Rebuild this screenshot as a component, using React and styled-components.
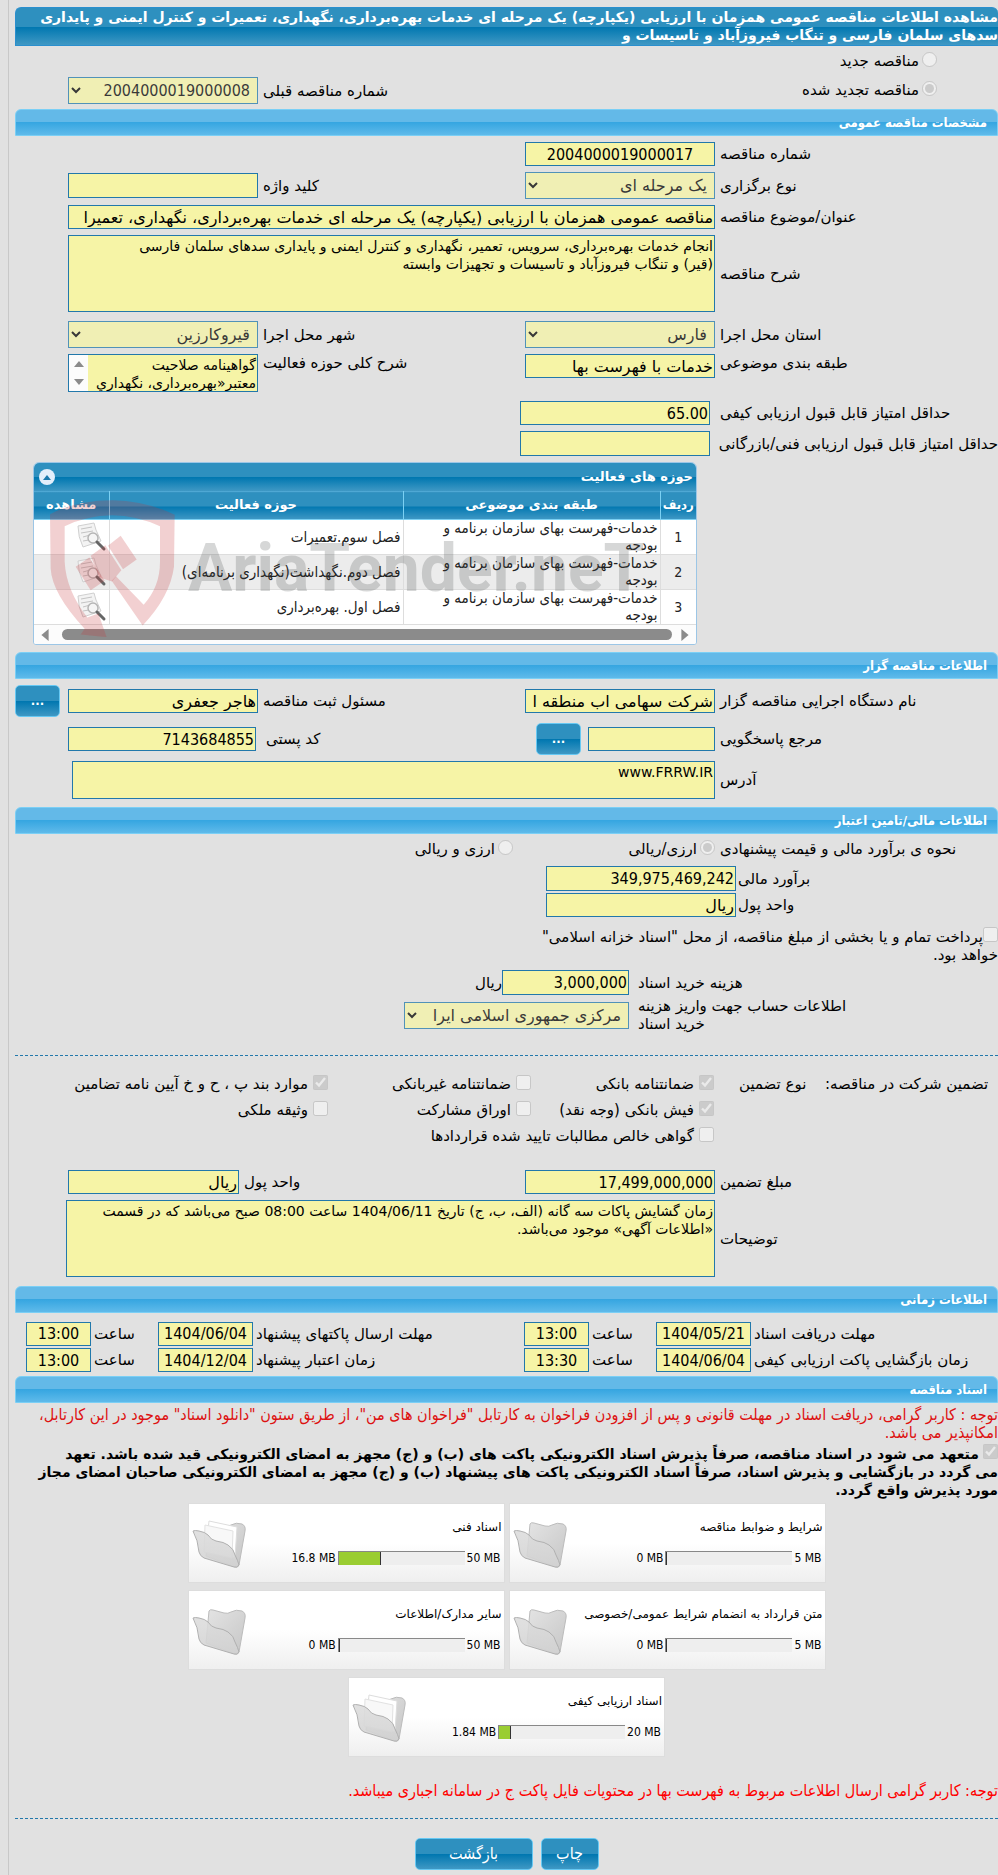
import React from "react";
import styled, { createGlobalStyle, css } from "styled-components";

const wide = `"DejaVu Sans", sans-serif`;
const narrow = `"DejaVu Sans Condensed", "DejaVu Sans", sans-serif`;

const GlobalStyle = createGlobalStyle`
  * {
    box-sizing: border-box;
  }
  body {
    margin: 0;
    background: #e1e1e1;
    overflow-x: hidden;
  }
  body, input, select, textarea, button {
    font-family: ${wide};
    font-size: 15px;
    line-height: 18px;
    color: #000;
  }
`;

const darkBar = css`
  background: linear-gradient(#2e90bf 0, #2e90bf 50%, #0077b0 51%, #3f98c4 100%);
`;

const Page = styled.main`
  direction: rtl;
  margin-left: 8px;
  padding: 7px 0 5px 6px;
  border-left: 1px solid #c8c8c8;
`;

const Title = styled.h1`
  ${darkBar}
  margin: 0;
  min-height: 39px;
  border: 1px solid #2a8fce;
  border-right: 0;
  border-radius: 6px 6px 0 0;
  color: #fff;
  font-size: 14px;
  line-height: 18px;
  font-weight: bold;
`;

const SectionBar = styled.h2`
  margin: ${(p) => p.$top ?? 9}px 0 ${(p) => p.$bottom ?? 6}px;
  height: 27px;
  padding: 0 10px;
  border: 1px solid #7bcff5;
  border-radius: 6px 6px 0 0;
  background: linear-gradient(#63b9e8 0, #63b9e8 48%, #36a6e1 50%, #5fbaea 100%);
  color: #fff;
  font-family: ${narrow};
  font-size: 13px;
  line-height: 25px;
  font-weight: bold;
`;

const Rows = styled.div`
  display: flex;
  flex-direction: column;
  gap: ${(p) => p.$gap ?? 6}px;
`;

const Row = styled.div`
  display: flex;
  align-items: ${(p) => p.$align || "center"};
  min-height: ${(p) => p.$h || 24}px;
  padding-left: ${(p) => p.$pad ?? 53}px;
  margin-top: ${(p) => p.$top || 0}px;
`;

const Label = styled.label`
  flex: 0 0 ${(p) => p.$w || 283}px;
  min-width: 0;
  padding-left: ${(p) => p.$gap ?? 5}px;
  text-align: left;
  white-space: nowrap;
`;

const MidLabel = styled.label`
  flex: 1;
  padding-left: ${(p) => p.$gap ?? 5}px;
  text-align: left;
  white-space: nowrap;
`;

const field = css`
  border: 1px solid #2278ab;
  border-radius: 0;
  background: #f6f4a6;
  margin: 0;
  outline: 0;
`;

const Input = styled.input`
  ${field}
  width: ${(p) => p.$w || 190}px;
  height: ${(p) => p.$h || 24}px;
  padding: 1px;
  font-family: ${(p) => (p.$text ? wide : narrow)};
  font-size: 16px;
  text-align: ${(p) => (p.$center ? "center" : "right")};
  ${(p) => p.$grow && "flex: 1; min-width: 0;"}
`;

const Area = styled.textarea`
  ${field}
  flex: 1;
  min-width: 0;
  height: ${(p) => p.$h}px;
  padding: 1px;
  font-size: 14px;
  resize: none;
  overflow: hidden;
`;

const Select = styled.select`
  ${field}
  width: ${(p) => p.$w || 190}px;
  height: 27px;
  padding: 0 3px;
  font-family: ${(p) => (p.$digits ? narrow : wide)};
  font-size: 16px;
  opacity: 0.75;
`;

const ScrollArea = styled.div`
  ${field}
  display: flex;
  width: 190px;
  height: 38px;

  textarea {
    border: 0;
    height: 36px;
  }
`;

const ScrollTrack = styled.div`
  width: 19px;
  background: #fcfcfc;
  display: flex;
  flex-direction: column;
  align-items: center;
  justify-content: space-between;
  padding: 4px 0;
`;

const Tick = styled.input`
  flex: none;
  width: 15px;
  height: 15px;
  margin: ${(p) => p.$m || "0"};
`;

const Choice = styled.label`
  display: flex;
  align-items: flex-start;
  gap: 3px;
  line-height: 19px;
  white-space: nowrap;
  ${(p) => p.$w && `width: ${p.$w}px;`}

  input[type="checkbox"] {
    margin-left: 2px;
  }
`;

const Button = styled.button`
  ${darkBar}
  width: ${(p) => p.$w || 45}px;
  height: 32px;
  padding: 0;
  border: 1px solid #66c8f3;
  border-radius: 5px;
  color: #fff;
  font-family: ${narrow};
  font-size: ${(p) => (p.$small ? 13 : 16)}px;
  font-weight: ${(p) => (p.$small ? "bold" : "normal")};
`;

const Divider = styled.hr`
  margin: ${(p) => p.$m};
  border: 0;
  border-top: 1px dashed #2278ab;
`;

/* activities grid */

const GridBox = styled.section`
  position: relative;
  margin: 0 301px 0 18px;
  border: 1px solid #9cc6e6;
  border-radius: 6px 6px 3px 3px;
  overflow: hidden;
  background: #fff;
`;

const GridTitle = styled.div`
  ${darkBar}
  display: flex;
  align-items: center;
  justify-content: space-between;
  height: 28px;
  padding: 0 3px 0 5px;
  color: #fff;
  font-weight: bold;
  font-size: 13px;
`;

const Fold = styled.button`
  display: flex;
  align-items: center;
  justify-content: center;
  width: 16px;
  height: 16px;
  padding: 0;
  border: 0;
  border-radius: 50%;
  background: #e3eefb;
`;

const Table = styled.table`
  width: 100%;
  border-collapse: collapse;
  table-layout: fixed;

  th {
    ${darkBar}
    height: 28px;
    padding: 0 0 2px;
    border-top: 1px solid #4fa8d4;
    border-bottom: 1px solid #7bd0f3;
    border-left: 1px solid #7bd0f3;
    color: #fff;
    font-size: 13px;
    white-space: nowrap;
  }
  th:first-child {
    font-family: ${narrow};
  }
  th:last-child,
  td:last-child {
    border-left: 0;
  }
  td {
    height: 35px;
    padding: 0 2px;
    border-bottom: 1px solid #ddd;
    border-left: 1px solid #ddd;
    font-family: ${narrow};
    font-size: 15px;
    line-height: 17px;
    color: #222;
  }
  tr:nth-child(even) td {
    background: #ececec;
  }
  td:first-child {
    text-align: center;
    font-size: 14px;
  }
  svg {
    display: block;
    margin-right: auto;
    margin-left: 42px;
  }
`;

const HScroll = styled.div`
  direction: ltr;
  display: flex;
  align-items: center;
  justify-content: space-between;
  height: 19px;
  padding: 0 5px;
  background: #fcfcfc;
`;

const Thumb = styled.div`
  flex: 1;
  height: 11px;
  margin: 0 7px 0 11px;
  border-radius: 6px;
  background: #8b8b8b;
`;

const Watermark = styled.div`
  position: absolute;
  left: 16px;
  top: 37px;
  direction: ltr;
  display: flex;
  gap: 13px;
  pointer-events: none;
`;

const Brand = styled.span`
  margin-top: 29px;
  font: bold 66px/80px Roboto, "Liberation Sans", sans-serif;
  white-space: nowrap;
  color: rgba(70, 75, 75, 0.22);
`;

/* documents */

const Notice = styled.p`
  margin: 0;
  font-family: ${narrow};
  font-size: 16px;
  color: ${(p) => p.$color || "#d11"};
`;

const Pledge = styled.label`
  display: block;
  margin-top: 2px;
  font-size: 14px;
  font-weight: bold;
`;

const Cards = styled.div`
  display: flex;
  flex-wrap: wrap;
  justify-content: center;
  gap: 7px 4px;
  margin: 4px auto 0;
  max-width: 640px;
`;

const Card = styled.article`
  display: flex;
  width: 317px;
  height: 80px;
  border: 1px solid #ddd;
  background: linear-gradient(#fff 50%, #efefef);
`;

const CardBody = styled.div`
  flex: 1;
  padding: 13px 2px 0 0;
`;

const CardName = styled.div`
  height: 32px;
  font-size: 12px;
  line-height: 20px;
  white-space: nowrap;
`;

const Usage = styled.div`
  display: flex;
  align-items: center;
  gap: 2px;
  direction: ltr;
  justify-content: flex-end;
  padding-right: 1px;
  font-family: ${narrow};
  font-size: 12px;
`;

const Meter = styled.div`
  width: 127px;
  height: 14px;
  border-top: 1px solid #888;
  border-left: 1px solid #888;
  background: #eee;
`;

const Fill = styled.div`
  height: 13px;
  border-right: 1px solid #333;
  background: #9acd32;
`;

const Actions = styled.div`
  display: flex;
  justify-content: center;
  gap: 8px;
`;

function Arrow({ dir, size = 10 }) {
  const d = {
    up: "M0 8 5 2 10 8Z",
    down: "M0 2 5 8 10 2Z",
    left: "M8 0 2 5 8 10Z",
    right: "M2 0 8 5 2 10Z",
  }[dir];
  return (
    <svg width={size} height={size} viewBox="0 0 10 10" fill="#8b8b8b">
      <path d={d} />
    </svg>
  );
}

function ViewIcon() {
  return (
    <svg width="32" height="30" viewBox="0 0 32 30">
      <path d="M3 4 19 1 21 8 26 19 8 25Q3 15 3 4Z" fill="#f3f3f3" stroke="#d0d0d0" />
      <path d="M6 7 17 5M6 11 18 9M8 15 15 13M8 19 14 18" stroke="#c4c4c4" fill="none" />
      <circle cx="18" cy="16" r="5" fill="#f4f4f4" fillOpacity=".85" stroke="#b5b5b5" strokeWidth="1.5" />
      <path d="M22 20 29 27" stroke="#666" strokeWidth="3" strokeLinecap="round" />
    </svg>
  );
}

function Folder({ full }) {
  return (
    <svg width="58" height="77" viewBox="0 0 58 77">
      <defs>
        <linearGradient id="back" x1="0" y1="0" x2="1" y2="1">
          <stop offset="0" stopColor="#e4e4e4" />
          <stop offset="1" stopColor="#c6c6c6" />
        </linearGradient>
        <linearGradient id="front" x1="0" y1="0" x2="0" y2="1">
          <stop offset="0" stopColor="#dcdcdc" />
          <stop offset="1" stopColor="#d2d2d2" />
        </linearGradient>
      </defs>
      <path
        d="M20 20Q21 18 24 19L35 22Q39 23 42 21Q47 18 53 20Q57 22 56 27L50 61Q49 64 46 63L17 52Z"
        fill="url(#back)"
        stroke="#bcbcbc"
        strokeLinejoin="round"
      />
      {full && (
        <>
          <path d="M20 17 48 23 46 54 17 48Z" fill="#fff" stroke="#ddd" />
          <path d="M16 21 44 27 43 54 15 48Z" fill="#f8f8f8" stroke="#e2e2e2" />
        </>
      )}
      <path
        d="M4 27Q6 26 10 27Q16 28 19 31Q22 36 27 37Q35 38 39 41Q45 45 46 51Q49 57 50 61Q48 64 45 63L15 54Q11 52 10 48Q9 36 4 27Z"
        fill="url(#front)"
        fillOpacity=".88"
        stroke="#b0b0b0"
      />
    </svg>
  );
}

function Shield() {
  return (
    <svg width="125" height="137" viewBox="60 30 375 410" fill="#c8323a" fillOpacity=".23">
      <path d="M60 72Q140 30 247 30Q350 32 434 74L432 230Q420 320 338 406L245 272 258 258 341 344Q390 290 390 215V108Q320 76 247 75Q170 76 104 108V215Q108 300 172 382L205 370 230 441 152 433 164 416Q66 310 62 235Z" />
      <path d="M234 167 272 137 320 208 279 237Z" />
      <path d="M182 197 226 165 274 240 246 274 208 262Z" />
      <path d="M137 230 178 202 224 272 182 300Z" />
    </svg>
  );
}

function Time({ id, width, title, date, hour }) {
  const DateLabel = width ? Label : MidLabel;
  return (
    <>
      <DateLabel $w={width} $gap={3} htmlFor={id}>{title}</DateLabel>
      <Input id={id} $w={95} $center readOnly value={date} />
      <Label $w={67} $gap={3} htmlFor={id + "h"}>ساعت</Label>
      <Input id={id + "h"} $w={65} $center readOnly value={hour} />
    </>
  );
}

const activities = [
  "فصل سوم.تعمیرات",
  "فصل دوم.نگهداشت(نگهداری برنامه‌ای)",
  "فصل اول. بهره‌برداری",
];

const documents = [
  { name: "شرایط و ضوابط مناقصه", used: 0, max: 5 },
  { name: "اسناد فنی", used: 16.8, max: 50 },
  { name: "متن قرارداد به انضمام شرایط عمومی/خصوصی", used: 0, max: 5 },
  { name: "سایر مدارک/اطلاعات", used: 0, max: 50 },
  { name: "اسناد ارزیابی کیفی", used: 1.84, max: 20 },
];

function App() {
  return (
    <Page>
      <GlobalStyle />
      <Title>
        مشاهده اطلاعات مناقصه عمومی همزمان با ارزیابی (یکپارچه) یک مرحله ای خدمات
        بهره‌برداری، نگهداری، تعمیرات و کنترل ایمنی و پایداری
        <br />
        سدهای سلمان فارسی و تنگاب فیروزآباد و تاسیسات و
      </Title>

      <Rows $gap={0}>
        <Row $h={30}>
          <Choice>
            <Tick type="radio" name="kind" disabled $m="0 61px 0 0" />
            مناقصه جدید
          </Choice>
        </Row>
        <Row $h={29}>
          <Choice>
            <Tick type="radio" name="kind" disabled defaultChecked $m="0 61px 0 0" />
            مناقصه تجدید شده
          </Choice>
          <MidLabel htmlFor="prev">شماره مناقصه قبلی</MidLabel>
          <Select id="prev" $digits disabled>
            <option>2004000019000008</option>
          </Select>
        </Row>
      </Rows>

      <SectionBar $top={4}>مشخصات مناقصه عمومی</SectionBar>
      <Rows>
        <Row>
          <Label htmlFor="no">شماره مناقصه</Label>
          <Input id="no" $center readOnly value="2004000019000017" />
        </Row>
        <Row $h={27}>
          <Label htmlFor="type">نوع برگزاری</Label>
          <Select id="type" disabled>
            <option>یک مرحله ای</option>
          </Select>
          <MidLabel htmlFor="key">کلید واژه</MidLabel>
          <Input id="key" $h={25} readOnly value="" />
        </Row>
        <Row>
          <Label htmlFor="subject">عنوان/موضوع مناقصه</Label>
          <Input
            id="subject"
            $grow
            $text
            readOnly
            value="مناقصه عمومی همزمان با ارزیابی (یکپارچه) یک مرحله ای خدمات بهره‌برداری، نگهداری، تعمیرا"
          />
        </Row>
        <Row>
          <Label htmlFor="desc">شرح مناقصه</Label>
          <Area
            id="desc"
            $h={77}
            readOnly
            value={
              "انجام خدمات بهره‌برداری، سرویس، تعمیر، نگهداری و کنترل ایمنی و پایداری سدهای سلمان فارسی\n(قیر) و تنگاب فیروزآباد و تاسیسات و تجهیزات وابسته"
            }
          />
        </Row>
        <Row $top={3} $h={27}>
          <Label htmlFor="state">استان محل اجرا</Label>
          <Select id="state" disabled>
            <option>فارس</option>
          </Select>
          <MidLabel htmlFor="city">شهر محل اجرا</MidLabel>
          <Select id="city" disabled>
            <option>قیروکارزین</option>
          </Select>
        </Row>
        <Row $align="flex-start">
          <Label htmlFor="cat">طبقه بندی موضوعی</Label>
          <Input id="cat" $text readOnly value="خدمات با فهرست بها" />
          <MidLabel htmlFor="scope">شرح کلی حوزه فعالیت</MidLabel>
          <ScrollArea>
            <Area
              id="scope"
              readOnly
              value={"گواهینامه صلاحیت\nمعتبر«بهره‌برداری، نگهداري"}
            />
            <ScrollTrack>
              <Arrow dir="up" />
              <Arrow dir="down" />
            </ScrollTrack>
          </ScrollArea>
        </Row>
        <Row $top={3}>
          <Label htmlFor="q" $w={288} $gap={10}>حداقل امتیاز قابل قبول ارزیابی کیفی</Label>
          <Input id="q" readOnly value="65.00" />
        </Row>
        <Row>
          <Label htmlFor="tech" $w={288} $gap={10}>حداقل امتیاز قابل قبول ارزیابی فنی/بازرگانی</Label>
          <Input id="tech" $h={25} readOnly value="" />
        </Row>

        <GridBox>
          <GridTitle>
            حوزه های فعالیت
            <Fold aria-label="بستن">
              <svg width="8" height="5" viewBox="0 0 8 5">
                <path d="M4 0 8 5H0Z" fill="#1b78ad" />
              </svg>
            </Fold>
          </GridTitle>
          <Table>
            <colgroup>
              <col style={{ width: "36px" }} />
              <col style={{ width: "257px" }} />
              <col />
              <col style={{ width: "75px" }} />
            </colgroup>
            <thead>
              <tr>
                <th>ردیف</th>
                <th>طبقه بندی موضوعی</th>
                <th>حوزه فعالیت</th>
                <th>مشاهده</th>
              </tr>
            </thead>
            <tbody>
              {activities.map((area, i) => (
                <tr key={area}>
                  <td>{i + 1}</td>
                  <td>
                    خدمات-فهرست بهای سازمان برنامه و
                    <br />
                    بودجه
                  </td>
                  <td>{area}</td>
                  <td>
                    <ViewIcon />
                  </td>
                </tr>
              ))}
            </tbody>
          </Table>
          <HScroll>
            <Arrow dir="left" size={12} />
            <Thumb />
            <Arrow dir="right" size={12} />
          </HScroll>
          <Watermark aria-hidden="true">
            <Shield />
            <Brand>AriaTender.neT</Brand>
          </Watermark>
        </GridBox>
      </Rows>

      <SectionBar $top={7}>اطلاعات مناقصه گزار</SectionBar>
      <Rows>
        <Row $h={32} $pad={0}>
          <Label htmlFor="org">نام دستگاه اجرایی مناقصه گزار</Label>
          <Input id="org" $text readOnly value="شرکت سهامی اب منطقه ا" />
          <MidLabel htmlFor="owner">مسئول ثبت مناقصه</MidLabel>
          <Input id="owner" $text readOnly value="هاجر جعفری" />
          <Row $h={32} $pad={0}>
            <Label as="span" $w={8} />
            <Button $small>...</Button>
          </Row>
        </Row>
        <Row $h={32}>
          <Label htmlFor="ref">مرجع پاسخگویی</Label>
          <Input id="ref" $w={127} readOnly value="" />
          <Label as="span" $w={7} />
          <Button $small>...</Button>
          <MidLabel htmlFor="zip" $gap={10}>کد پستی</MidLabel>
          <Input id="zip" $w={188} readOnly value="7143684855" />
        </Row>
        <Row $pad={57}>
          <Label htmlFor="addr">آدرس</Label>
          <Area id="addr" $h={38} readOnly value="www.FRRW.IR" />
        </Row>
      </Rows>

      <SectionBar $top={8}>اطلاعات مالی/تامین اعتبار</SectionBar>
      <Rows>
        <Row $h={20} $align="flex-start">
          <Label as="span">نحوه ی برآورد مالی و قیمت پیشنهادی</Label>
          <Choice $w={202}>
            <Tick type="radio" name="cur" disabled defaultChecked />
            ارزی/ریالی
          </Choice>
          <Choice>
            <Tick type="radio" name="cur" disabled />
            ارزی و ریالی
          </Choice>
        </Row>
        <Rows $gap={2}>
          <Row>
            <Label htmlFor="est" $w={262} $gap={2}>برآورد مالی</Label>
            <Input id="est" $h={25} readOnly value="349,975,469,242" />
          </Row>
          <Row>
            <Label htmlFor="unit" $w={262} $gap={2}>واحد پول</Label>
            <Input id="unit" $text readOnly value="ریال" />
          </Row>
        </Rows>
        <Row $h={41} $pad={520} $align="flex-end">
          <label>
            <Tick type="checkbox" disabled />
            پرداخت تمام و یا بخشی از مبلغ مناقصه، از محل "اسناد خزانه اسلامی" خواهد بود.
          </label>
        </Row>
        <Rows $gap={2}>
          <Row>
            <Label htmlFor="cost" $w={369} $gap={9}>هزینه خرید اسناد</Label>
            <Input id="cost" $w={127} $h={25} readOnly value="3,000,000" />
            ریال
          </Row>
          <Row $h={28} $pad={0}>
            <Label htmlFor="acc" $w={369} $gap={9}>
              اطلاعات حساب جهت واریز هزینه
              <br />
              خرید اسناد
            </Label>
            <Select id="acc" $w={225} disabled>
              <option>مرکزی جمهوری اسلامی ایرا</option>
            </Select>
          </Row>
        </Rows>
      </Rows>

      <Divider $m="22px 0 15px" />

      <Rows $gap={0}>
        <Row $h={26} $pad={0}>
          <Label as="span" $w={173} $gap={0}>تضمین شرکت در مناقصه:</Label>
          <Label as="span" $w={111} $gap={25}>نوع تضمین</Label>
          <Choice $w={183}>
            <Tick type="checkbox" disabled defaultChecked />
            ضمانتنامه بانکی
          </Choice>
          <Choice $w={203}>
            <Tick type="checkbox" disabled />
            ضمانتنامه غیربانکی
          </Choice>
          <Choice>
            <Tick type="checkbox" disabled defaultChecked />
            موارد بند پ ، ح و خ آیین نامه تضامین
          </Choice>
        </Row>
        <Row $h={26} $pad={0}>
          <Label as="span" $w={284} />
          <Choice $w={183}>
            <Tick type="checkbox" disabled defaultChecked />
            فیش بانکی (وجه نقد)
          </Choice>
          <Choice $w={203}>
            <Tick type="checkbox" disabled />
            اوراق مشارکت
          </Choice>
          <Choice>
            <Tick type="checkbox" disabled />
            وثیقه ملکی
          </Choice>
        </Row>
        <Row $h={26} $pad={0}>
          <Label as="span" $w={284} />
          <Choice>
            <Tick type="checkbox" disabled />
            گواهی خالص مطالبات تایید شده قراردادها
          </Choice>
        </Row>
      </Rows>

      <Rows>
        <Row $top={21}>
          <Label htmlFor="amount">مبلغ تضمین</Label>
          <Input id="amount" readOnly value="17,499,000,000" />
          <MidLabel htmlFor="unit2">واحد پول</MidLabel>
          <Input id="unit2" $text $w={171} readOnly value="ریال" />
        </Row>
        <Row $pad={51}>
          <Label htmlFor="notes">توضیحات</Label>
          <Area
            id="notes"
            $h={77}
            readOnly
            value={
              "زمان گشایش پاکات سه گانه (الف، ب، ج) تاریخ 1404/06/11 ساعت 08:00 صبح می‌باشد که در قسمت\n«اطلاعات آگهی» موجود می‌باشد."
            }
          />
        </Row>
      </Rows>

      <SectionBar>اطلاعات زمانی</SectionBar>
      <Rows $gap={2}>
        <Row $top={2} $pad={11} $h={25}>
          <Time id="t1" width={247} title="مهلت دریافت اسناد" date="1404/05/21" hour="13:00" />
          <Time id="t2" title="مهلت ارسال پاکتهای پیشنهاد" date="1404/06/04" hour="13:00" />
        </Row>
        <Row $pad={11}>
          <Time id="t3" width={247} title="زمان بازگشایی پاکت ارزیابی کیفی" date="1404/06/04" hour="13:30" />
          <Time id="t4" title="زمان اعتبار پیشنهاد" date="1404/12/04" hour="13:00" />
        </Row>
      </Rows>

      <SectionBar $top={4} $bottom={3}>اسناد مناقصه</SectionBar>
      <Notice>
        توجه : کاربر گرامی، دریافت اسناد در مهلت قانونی و پس از افزودن فراخوان به کارتابل
        "فراخوان های من"، از طریق ستون "دانلود اسناد" موجود در این کارتابل، امکانپذیر می
        باشد.
      </Notice>
      <Pledge>
        <Tick type="checkbox" disabled defaultChecked $m="0 0 0 4px" />
        متعهد می شود در اسناد مناقصه، صرفاً پذیرش اسناد الکترونیکی پاکت های (ب) و (ج) مجهز
        به امضای الکترونیکی قید شده باشد. تعهد
        <br />
        می گردد در بازگشایی و پذیرش اسناد، صرفاً اسناد الکترونیکی پاکت های پیشنهاد (ب) و
        (ج) مجهز به امضای الکترونیکی صاحبان امضای مجاز
        <br />
        مورد پذیرش واقع گردد.
      </Pledge>

      <Cards>
        {documents.map((doc) => (
          <Card key={doc.name}>
            <CardBody>
              <CardName>{doc.name}</CardName>
              <Usage>
                {doc.used} MB
                <Meter>
                  <Fill style={{ width: (doc.used / doc.max) * 100 + "%" }} />
                </Meter>
                {doc.max} MB
              </Usage>
            </CardBody>
            <Folder full={doc.used > 0} />
          </Card>
        ))}
      </Cards>

      <Row $top={22} $pad={0}>
        <Notice $color="#f00">
          توجه: کاربر گرامی ارسال اطلاعات مربوط به فهرست بها در محتویات فایل پاکت ج در سامانه
          اجباری میباشد.
        </Notice>
      </Row>

      <Divider $m="15px 0 19px" />
      <Actions>
        <Button $w={58}>چاپ</Button>
        <Button $w={118}>بازگشت</Button>
      </Actions>
    </Page>
  );
}

export default App;
